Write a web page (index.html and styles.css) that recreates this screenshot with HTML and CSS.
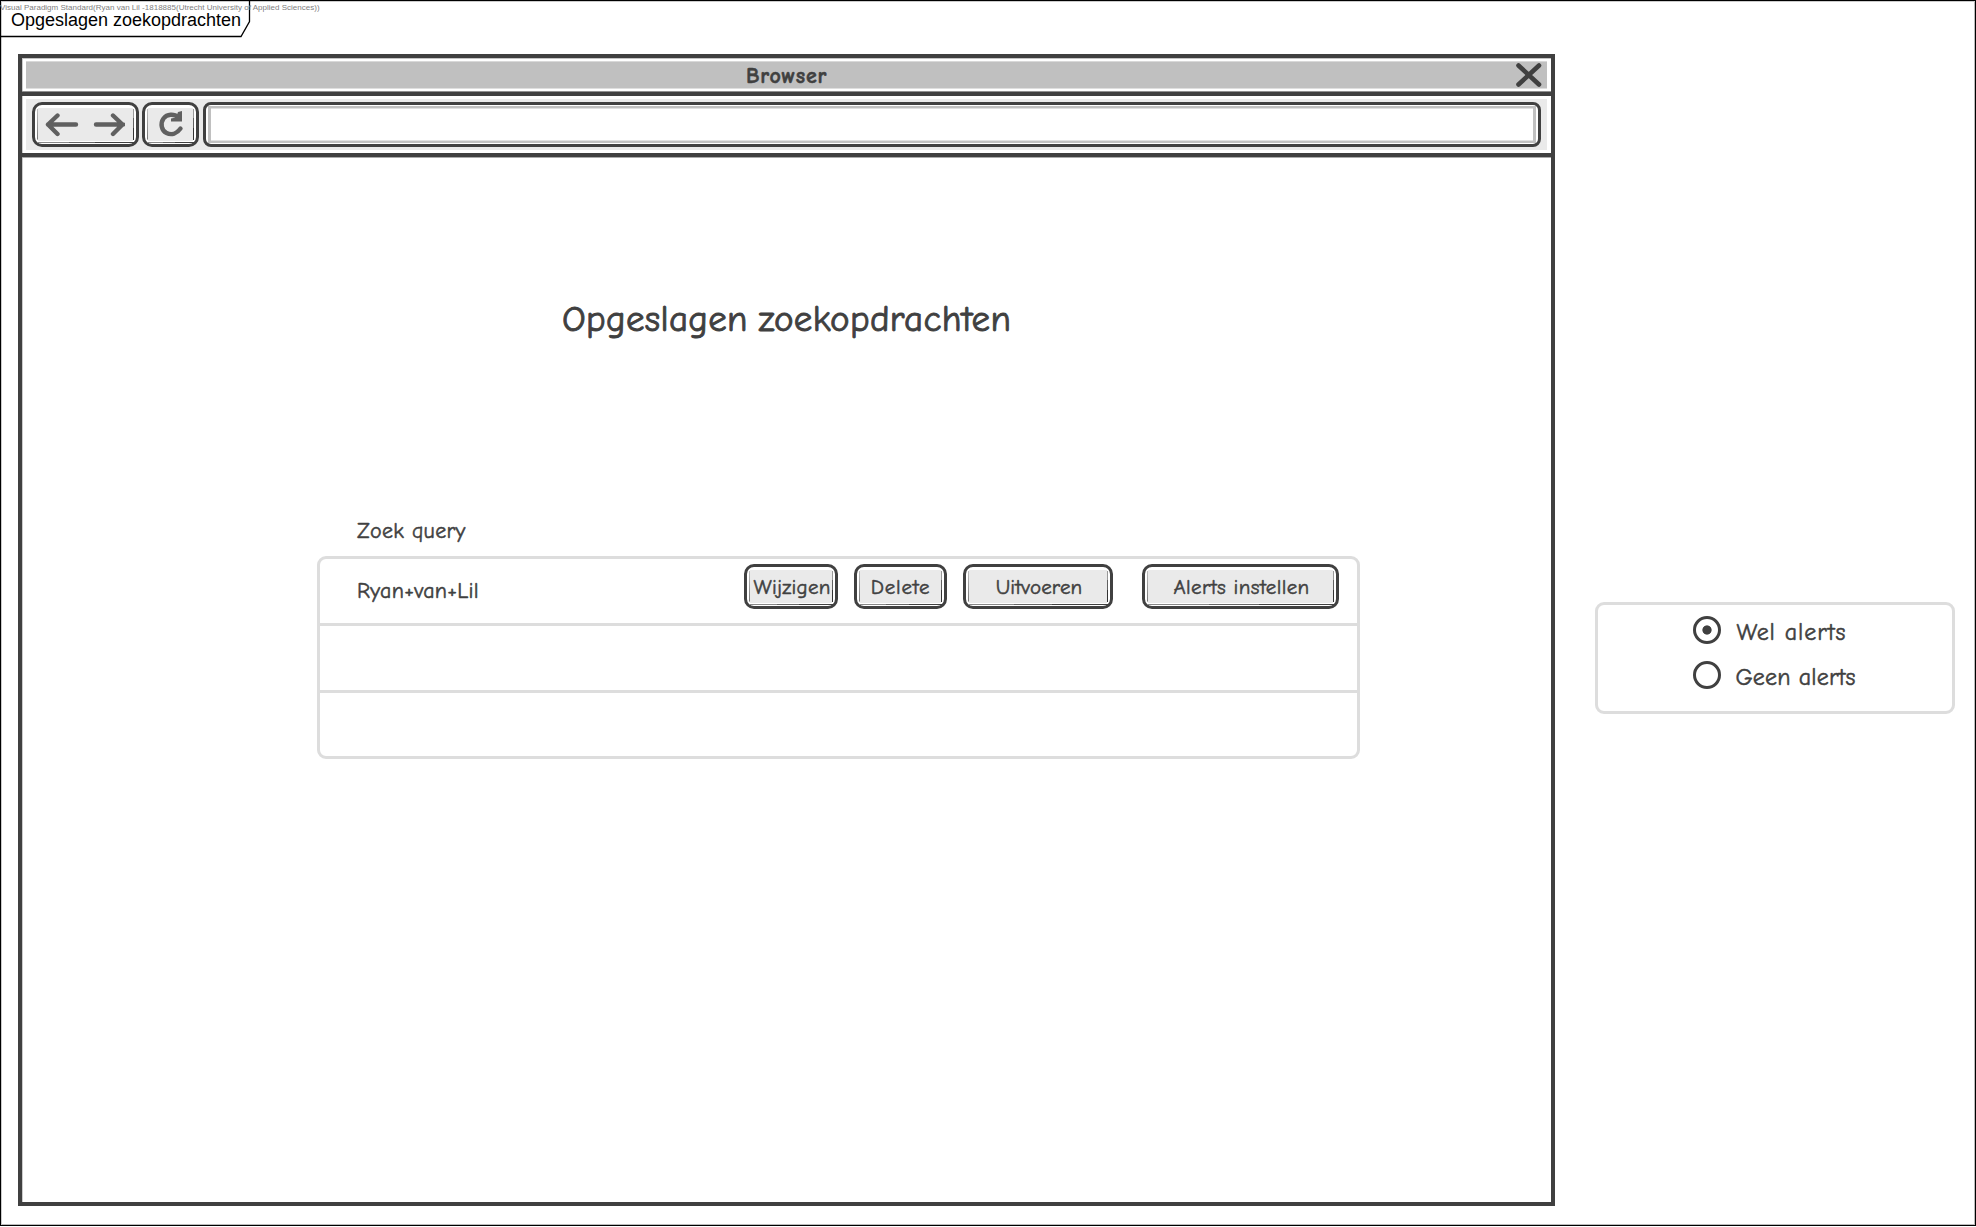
FILE: index.html
```html
<!DOCTYPE html>
<html lang="nl">
<head>
<meta charset="utf-8">
<title>Opgeslagen zoekopdrachten</title>
<link rel="stylesheet" href="styles.css">
</head>
<body>
<div class="diagram">
  <svg class="tab-outline" width="252" height="40" viewBox="0 0 252 40" fill="none" stroke="#000" stroke-width="1.3">
    <path d="M0 36.500H241L249.500 21.500V0"/>
  </svg>
  <div class="watermark">Visual Paradigm Standard(Ryan van Lil -1818885(Utrecht University of Applied Sciences))</div>
  <div class="tab-label">Opgeslagen zoekopdrachten</div>

  <main class="window">
    <header class="titlebar">
      <div class="titlebar-fill">
        <span class="window-title">Browser</span>
        <svg class="close" width="28" height="26" viewBox="0 0 28 26" fill="none" stroke="#404040" stroke-width="4.6" stroke-linecap="round">
          <path d="M3.500 2.500L24 21.500M24 2.500L3.500 21.500"/>
        </svg>
      </div>
    </header>
    <div class="toolbar">
      <div class="toolbar-fill">
        <div class="button nav">
          <svg width="80" height="24" viewBox="0 0 80 24" fill="none" stroke="#606060" stroke-width="4.4" stroke-linecap="round" stroke-linejoin="round">
            <path d="M31 11.500H3M12.500 2.500L3 11.500L12.500 21"/>
            <path d="M51 11.500H78M68 2.500L77.500 11.500L68 21"/>
          </svg>
        </div>
        <div class="button refresh">
          <svg width="26" height="28" viewBox="0 0 26 28">
            <path d="M20.500 6.500C16 2.500 9 3 5.500 7.500C2 12.500 3.500 19.500 8.500 22C13.500 24.500 19 22.500 22.500 17.500" fill="none" stroke="#606060" stroke-width="4.4" stroke-linecap="round"/>
            <path d="M20 1L24 0V10.500H13V7.500L18 6.500Z" fill="#606060"/>
          </svg>
        </div>
        <div class="address"><div class="address-inner"></div></div>
      </div>
    </div>
    <section class="page">
      <h1 class="heading">Opgeslagen zoekopdrachten</h1>
      <div class="column-name">Zoek query</div>
      <div class="table">
        <div class="row">
          <span class="query">Ryan+van+Lil</span>
          <div class="button edit"><span>Wijzigen</span></div>
          <div class="button delete"><span>Delete</span></div>
          <div class="button run"><span>Uitvoeren</span></div>
          <div class="button alerts"><span>Alerts instellen</span></div>
        </div>
        <div class="row"></div>
        <div class="row"></div>
      </div>
    </section>
  </main>

  <aside class="options">
    <div class="option"><i class="radio checked"></i><span class="with">Wel alerts</span></div>
    <div class="option"><i class="radio"></i><span class="without">Geen alerts</span></div>
  </aside>
</div>
</body>
</html>
```
FILE: styles.css
```css
* { box-sizing: border-box; }

body {
  margin: 0;
  background: #fff;
  color: #404040;
  font-family: "Comic Sans MS", "Comic Neue", Lato, sans-serif;
  -webkit-text-stroke: .5px currentColor;
}

.diagram {
  position: relative;
  display: flex;
  align-items: flex-start;
  width: 1976px;
  height: 1226px;
  padding: 53px 0 0 17px;
  border: 1px solid #000;
  box-shadow: inset 1px 1px #ccc, inset -1px -1px #bbb, 0 1px #bbb;
}

.tab-outline { position: absolute; left: -1px; top: -1px; }

.watermark,
.tab-label {
  position: absolute;
  white-space: nowrap;
  font-family: "Liberation Sans", Arial, sans-serif;
  -webkit-text-stroke: 0;
}

.watermark { left: -1px; top: 2px; font-size: 8px; line-height: 9px; letter-spacing: .01px; color: #808080; }
.tab-label { left: 10px; top: 8px; font-size: 18px; line-height: 22px; letter-spacing: -.01px; color: #000; }

.window {
  display: flex;
  flex-direction: column;
  width: 1537px;
  height: 1152px;
  border: 4px solid #404040;
  box-shadow: inset 1px 1px #ccc;
}

.titlebar {
  flex: none;
  height: 34px;
  padding: 2px 4px;
  border-top: 1px solid #c4c4c4;
  border-bottom: 1px solid #909090;
}

.titlebar-fill {
  position: relative;
  height: 28px;
  background: #c0c0c0;
  border-top: 1px solid #d8d8d8;
  border-bottom: 1px solid #dedede;
  text-align: center;
}

.window-title {
  display: block;
  font-size: 22px;
  font-weight: 700;
  line-height: 28px;
  letter-spacing: .7px;
}

.close { position: absolute; right: 4px; top: 1px; }

.toolbar {
  flex: none;
  height: 65px;
  padding: 3px 4px;
  border-top: 4px solid #404040;
  border-bottom: 4px solid #404040;
  box-shadow: 0 1px #aaa;
}

.toolbar-fill {
  display: flex;
  height: 51px;
  padding: 3px 6px;
  background: #eaeaea;
}

.button {
  position: relative;
  display: flex;
  align-items: center;
  justify-content: center;
  flex: none;
  height: 45px;
  border: 3px solid #404040;
  border-radius: 10px;
  background: linear-gradient(#eaeaea, #eaeaea) 3px 3px / calc(100% - 6px) calc(100% - 6px) no-repeat #fff;
  font-size: 21px;
}

/* uneven pencil strokes along the left, right and bottom edges */
.button::after {
  content: "";
  position: absolute;
  inset: 4px 2px 1px;
  background:
    linear-gradient(90deg, #888 33%, #666 33% 60%, #404040 60%) 0 100% / 100% 1px,
    linear-gradient(#c0c0c0, #777) 0 0 / 1px 90%,
    linear-gradient(#999 30%, #606060 30% 60%, #333 60%) 100% 0 / 1px 92%;
  background-repeat: no-repeat;
}

.button span { position: relative; z-index: 1; white-space: nowrap; line-height: 24px; }

.nav { width: 107px; margin-right: 4px; }
.refresh { width: 57px; margin-right: 4px; margin-left: -1px; }
.nav svg, .refresh svg { position: relative; z-index: 1; }
.nav svg { left: -1px; }

.address {
  flex: none;
  width: 1338px;
  height: 45px;
  padding: 1px 2px;
  border: 3px solid #404040;
  border-radius: 8px;
  background: #fff;
}

.address-inner {
  height: 100%;
  border: solid #c0c0c0;
  border-width: 2px 3px;
  box-shadow: inset 0 1px #e0e0e0, inset 0 -1px #e0e0e0;
}

.page { flex: 1; padding-left: 295px; }

.heading {
  width: 460px;
  height: 52px;
  margin: 131px 0 0 245px;
  overflow: hidden;
  font-size: 37px;
  font-weight: 400;
  line-height: 62px;
  letter-spacing: .3px;
  word-spacing: -2px;
  white-space: nowrap;
  -webkit-text-stroke-width: .9px;
}

.column-name {
  height: 28px;
  margin: 177px 0 0 40px;
  font-size: 22px;
  line-height: 28px;
  letter-spacing: .3px;
}

.table {
  width: 1043px;
  height: 203px;
  margin-top: 11px;
  border: 3px solid #ddd;
  border-radius: 9px;
}

.row {
  display: flex;
  height: 67px;
  padding-top: 5px;
  border-bottom: 3px solid #ddd;
}

.row:last-child { border-bottom: 0; }

.query { width: 424px; padding: 13px 0 0 37px; font-size: 22px; line-height: 28px; letter-spacing: .25px; }

.edit { width: 94px; margin-right: 16px; letter-spacing: .25px; }
.edit span { left: 1px; }
.delete { width: 93px; margin-right: 16px; letter-spacing: .8px; }
.run { width: 150px; margin-right: 29px; letter-spacing: .15px; }
.run span, .alerts span { left: 1px; }
.alerts { width: 197px; letter-spacing: .4px; }

.options {
  width: 360px;
  height: 112px;
  margin: 548px 0 0 40px;
  padding: 11px 0 0 94.5px;
  border: 3px solid #ddd;
  border-radius: 9px;
}

.option { display: flex; align-items: flex-start; height: 45px; }

.radio {
  width: 28px;
  height: 28px;
  margin-right: 16px;
  border: 3px solid #404040;
  border-radius: 50%;
}

.radio.checked { background: radial-gradient(circle, #404040 4.2px, transparent 5px); }

.option span { padding-top: 2px; font-size: 24px; line-height: 28px; }
.with { letter-spacing: .95px; }
.without { margin-left: -1px; letter-spacing: .15px; }
```
